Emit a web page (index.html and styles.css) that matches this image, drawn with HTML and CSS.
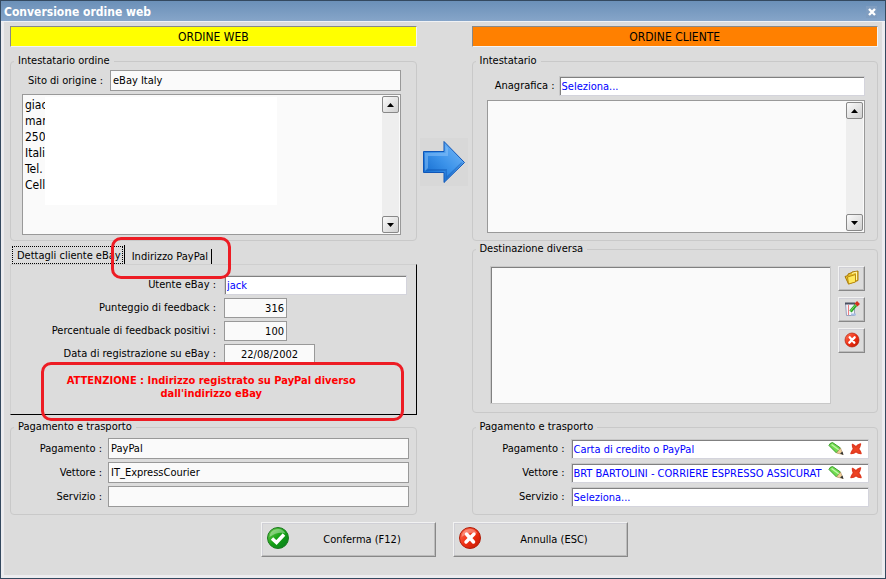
FILE: index.html
```
<!DOCTYPE html>
<html lang="it">
	<head>
		<meta charset="utf-8" />
		<title>Conversione ordine web</title>
		<link rel="stylesheet" href="styles.css">
	</head>
	<body>
		<div class="window">
			<header class="titlebar">
				<h1>Conversione ordine web</h1>
				<button type="button" class="close" aria-label="Chiudi">
					<svg width="8" height="8" viewBox="0 0 8 8"><path d="M1 1l6 6M7 1l-6 6" stroke="#fff" stroke-width="2.4" /></svg>
				</button>
			</header>
			<form class="content">
				<div class="columns">
					<!-- ordine web -->
					<div class="column">
						<h2 class="banner web">ORDINE WEB</h2>
						<fieldset class="holder">
							<legend>Intestatario ordine</legend>
							<div class="row">
								<label for="sito">Sito di origine :</label>
								<input type="text" id="sito" class="flat" value="eBay Italy" readonly />
							</div>
							<div class="memo">
								<textarea aria-label="Intestatario ordine" readonly>giac
mar
250
Itali
Tel.
Cell</textarea>
								<div class="scroll">
									<button type="button" aria-label="Su"><svg width="7" height="4" viewBox="0 0 7 4"><path d="M0 4L3.5 0L7 4z" /></svg></button>
									<button type="button" aria-label="Giù"><svg width="7" height="4" viewBox="0 0 7 4"><path d="M0 0L3.5 4L7 0z" /></svg></button>
								</div>
								<div class="mask"></div>
							</div>
						</fieldset>
						<div class="tabs">
							<button type="button" class="tab active"><span>Dettagli cliente eBay</span></button>
							<button type="button" class="tab">Indirizzo PayPal<i class="callout"></i></button>
						</div>
						<div class="panel">
							<div class="row">
								<label for="utente">Utente eBay :</label>
								<input type="text" id="utente" class="sunken" value="jack" />
							</div>
							<div class="row">
								<label for="punteggio">Punteggio di feedback :</label>
								<input type="text" id="punteggio" class="flat number" value="316" readonly />
							</div>
							<div class="row">
								<label for="percentuale">Percentuale di feedback positivi :</label>
								<input type="text" id="percentuale" class="flat number" value="100" readonly />
							</div>
							<div class="row">
								<label for="data">Data di registrazione su eBay :</label>
								<input type="text" id="data" class="flat date" value="22/08/2002" readonly />
							</div>
							<p class="warning">ATTENZIONE : Indirizzo registrato su PayPal diverso<br />dall'indirizzo eBay<i class="callout"></i></p>
						</div>
						<fieldset class="payment">
							<legend>Pagamento e trasporto</legend>
							<div class="row">
								<label for="pagamento1">Pagamento :</label>
								<input type="text" id="pagamento1" class="flat" value="PayPal" readonly />
							</div>
							<div class="row">
								<label for="vettore1">Vettore :</label>
								<input type="text" id="vettore1" class="flat" value="IT_ExpressCourier" readonly />
							</div>
							<div class="row">
								<label for="servizio1">Servizio :</label>
								<input type="text" id="servizio1" class="flat" value="" readonly />
							</div>
						</fieldset>
					</div>

					<div class="arrow">
						<svg width="48" height="48" viewBox="0 0 48 48">
							<defs>
								<linearGradient id="blue" x1="0" y1="1" x2="1" y2="0">
									<stop offset="0" stop-color="#0a62c8" />
									<stop offset="0.5" stop-color="#3c93ea" />
									<stop offset="1" stop-color="#7cbcf8" />
								</linearGradient>
							</defs>
							<path d="M3.5 13.5H24V3.5L44.5 24.5L24 44.5V34.5H3.5z" fill="url(#blue)" stroke="#0f56b8" />
							<path d="M5 33V15H25.5V7.5L28 10V18H8V30z" fill="#8cc4fa" opacity=".5" />
							<path d="M5 33L8 31H27V38L41 24.5H43L25.5 42V33z" fill="#0b4fae" opacity=".4" />
						</svg>
					</div>

					<!-- ordine cliente -->
					<div class="column">
						<h2 class="banner client">ORDINE CLIENTE</h2>
						<fieldset class="holder customer">
							<legend>Intestatario</legend>
							<div class="row">
								<label for="anagrafica">Anagrafica :</label>
								<input type="text" id="anagrafica" class="sunken" value="Seleziona..." />
							</div>
							<div class="memo">
								<textarea aria-label="Intestatario" readonly></textarea>
								<div class="scroll">
									<button type="button" aria-label="Su"><svg width="7" height="4" viewBox="0 0 7 4"><path d="M0 4L3.5 0L7 4z" /></svg></button>
									<button type="button" aria-label="Giù"><svg width="7" height="4" viewBox="0 0 7 4"><path d="M0 0L3.5 4L7 0z" /></svg></button>
								</div>
							</div>
						</fieldset>
						<fieldset class="destination">
							<legend>Destinazione diversa</legend>
							<textarea class="list" aria-label="Destinazione diversa" readonly></textarea>
							<div class="tools">
								<button type="button" class="raised" aria-label="Apri">
									<svg width="16" height="16" viewBox="0 0 16 16">
										<path d="M1 6.5l3-1V4l4-1.5V2l6-1v9.5L4.5 14z" fill="#e9c22c" stroke="#a87908" />
										<path d="M3.5 7L11.5 4.5v7.5L4.5 14z" fill="#ffe95e" stroke="#b98a10" />
										<path d="M8 3.5l4.5-1.5v8" fill="none" stroke="#fff6b0" />
									</svg>
								</button>
								<button type="button" class="raised" aria-label="Modifica">
									<svg width="16" height="16" viewBox="0 0 16 16">
										<path d="M1.5 2.5h9v12h-8z" fill="#f2f4fb" stroke="#9aa0b8" />
										<path d="M1 2.5h10" stroke="#4c5060" stroke-width="2" />
										<path d="M4.5 4v10" stroke="#ee7f7f" />
										<path d="M7 13.5h5" stroke="#a8c0e4" stroke-width="2" />
										<path d="M6.5 10.5L12 4" stroke="#2fa32a" stroke-width="3" />
										<path d="M6.5 10L11.5 4" stroke="#7de06a" />
										<path d="M12 4L14.5 1.5" stroke="#d5301c" stroke-width="4" />
									</svg>
								</button>
								<button type="button" class="raised" aria-label="Elimina">
									<svg width="16" height="16" viewBox="0 0 24 24">
										<circle cx="12" cy="12" r="10.5" fill="url(#red)" stroke="#b01c08" />
										<path d="M8.5 8l7 8M16 8l-8 8" stroke="#fff" stroke-width="3.5" stroke-linecap="round" />
									</svg>
								</button>
							</div>
						</fieldset>
						<fieldset class="payment customer">
							<legend>Pagamento e trasporto</legend>
							<div class="row">
								<label for="pagamento2">Pagamento :</label>
								<div class="sunken lookup">
									<input type="text" id="pagamento2" value="Carta di credito o PayPal" />
									<button type="button" aria-label="Modifica pagamento"><svg width="16" height="16" viewBox="0 0 16 16"><use href="#pencil" /></svg></button>
									<button type="button" aria-label="Elimina pagamento"><svg width="12" height="12" viewBox="0 0 12 12"><use href="#cross" /></svg></button>
								</div>
							</div>
							<div class="row">
								<label for="vettore2">Vettore :</label>
								<div class="sunken lookup">
									<input type="text" id="vettore2" value="BRT BARTOLINI - CORRIERE ESPRESSO ASSICURAT" />
									<button type="button" aria-label="Modifica vettore"><svg width="16" height="16" viewBox="0 0 16 16"><use href="#pencil" /></svg></button>
									<button type="button" aria-label="Elimina vettore"><svg width="12" height="12" viewBox="0 0 12 12"><use href="#cross" /></svg></button>
								</div>
							</div>
							<div class="row">
								<label for="servizio2">Servizio :</label>
								<input type="text" id="servizio2" class="sunken" value="Seleziona..." />
							</div>
						</fieldset>
					</div>
				</div>

				<div class="actions">
					<button type="button" class="raised">
						<svg width="24" height="24" viewBox="0 0 24 24">
							<circle cx="12" cy="12" r="10.5" fill="url(#green)" stroke="#1c7a20" />
							<path d="M3.5 11a8.5 8.5 0 0 1 16-3.5Q12 5 3.5 11z" fill="#fff" opacity=".35" />
							<path d="M6 12.5l4.5 4L18 8.5" fill="none" stroke="#fff" stroke-width="3.5" />
						</svg>
						<span>Conferma (F12)</span>
					</button>
					<button type="button" class="raised">
						<svg width="24" height="24" viewBox="0 0 24 24">
							<circle cx="12" cy="12" r="10.5" fill="url(#red)" stroke="#b01c08" />
							<path d="M3.5 11a8.5 8.5 0 0 1 16-3.5Q12 5 3.5 11z" fill="#fff" opacity=".3" />
							<path d="M8.5 8l7 8M16 8l-8 8" stroke="#fff" stroke-width="3.5" stroke-linecap="round" />
						</svg>
						<span>Annulla (ESC)</span>
					</button>
				</div>
			</form>
		</div>

		<!-- icone condivise -->
		<svg class="defs" width="0" height="0" aria-hidden="true">
			<defs>
				<linearGradient id="red" x1="0" y1="0" x2="1" y2="1">
					<stop offset="0" stop-color="#ff7a5c" />
					<stop offset="0.5" stop-color="#f03014" />
					<stop offset="1" stop-color="#c01800" />
				</linearGradient>
				<linearGradient id="green" x1="0" y1="0" x2="1" y2="1">
					<stop offset="0" stop-color="#7fd35a" />
					<stop offset="0.5" stop-color="#12a012" />
					<stop offset="1" stop-color="#0a7a22" />
				</linearGradient>
				<g id="pencil">
					<path d="M1 4.5Q1.5 2 4.5 1.5L12.5 7L8.5 12z" fill="#6fdc4e" stroke="#3b9c2c" />
					<path d="M3.5 3.5L11 9" stroke="#c2f5a8" stroke-width="1.5" />
					<path d="M8.5 12L12.5 7L15 13.5z" fill="#f0cf98" stroke="#a98a5c" stroke-width=".6" />
					<path d="M12 12.5l2.5-2 1 3.5z" fill="#333" />
				</g>
				<g id="cross">
					<path d="M2.5 1.5Q5 3 6 4Q7.5 2 10.5 1Q10 4 8.5 6Q10 7.5 11 10.5Q8 10.5 6 8.5Q4 10.5 1 10.5Q2 8 3.5 6Q2.5 4 2.5 1.5z" fill="#ee4422" stroke="#e03a20" stroke-width="1.5" stroke-linejoin="round" />
				</g>
			</defs>
		</svg>
	</body>
</html>
```
FILE: styles.css
```
*{
	margin: 0;
	padding: 0;
	box-sizing: border-box;
}
body,
input,
textarea,
button{
	font-family: Tahoma, "DejaVu Sans Condensed", "Noto Sans", sans-serif;
	font-size: 11px;
	line-height: 14px;
	color: #000;
}
button{
	background: none;
	border: 0;
}
input,
textarea{
	min-width: 0;
	outline: 0;
}
.defs{
	position: absolute;
}
/*finestra*/
.window{
	min-height: 100vh;
	background: #dcdcdc;
	border: 1px solid #34495f;
	display: flex;
	flex-direction: column;
}
.titlebar{
	height: 21px;
	padding: 2px 8px 0 3px;
	display: flex;
	align-items: center;
	justify-content: space-between;
	background: linear-gradient(#6b90b8, #86a5c9);
	border-bottom: 1px solid #f0f2f5;
}
.titlebar h1{
	font-size: 12px;
	line-height: 16px;
	color: #fff;
}
.close{
	width: 11px;
	height: 12px;
	display: flex;
	align-items: center;
	justify-content: center;
	background: #7f9dc0;
}
.content{
	flex: 1;
	padding: 4px 4px 0 6px;
	border: solid #ececef;
	border-width: 0 3px 3px 3px;
}
.columns{
	display: grid;
	grid-template-columns: 1fr 55px 1fr;
}
.column{
	min-width: 0;
	display: flex;
	flex-direction: column;
}
.banner{
	height: 21px;
	margin-bottom: 7px;
	font-size: 12px;
	font-weight: normal;
	line-height: 20px;
	text-align: center;
	border: 1px solid #888;
	border-right-color: #f4f4f4;
	border-bottom-color: #f4f4f4;
}
.web{
	background: #ffff00;
}
.client{
	background: #ff8000;
}
.arrow{
	display: flex;
	justify-content: center;
	align-items: flex-start;
	padding-top: 112px;
}
.arrow svg{
	background: #d8d8d8;
}
/*gruppi*/
fieldset{
	min-width: 0;
	border: 1px solid #c9c9c9;
	border-radius: 4px;
}
legend{
	padding: 0 4px;
}
.row{
	display: flex;
	align-items: center;
}
.row label{
	flex: none;
	text-align: right;
	white-space: nowrap;
}
.row > input,
.lookup{
	flex: 1;
}
.flat{
	height: 21px;
	padding: 0 2px;
	background: #fafafa;
	border: 1px solid #999;
}
.sunken{
	height: 20px;
	padding: 0 2px;
	color: #0000ff;
	background: #fff;
	border: 1px solid #c8c8c8;
	border-right-color: #d4d4dc;
	border-bottom-color: #d4d4dc;
	box-shadow: inset 1px 1px #808080;
}
.holder{
	padding: 2px 15px 5px 11px;
	margin-bottom: 4px;
}
.holder legend{
	margin-left: -8px;
}
.holder label{
	width: 81px;
	margin-right: 7px;
}
.holder.customer{
	padding: 8px 12px 7px 14px;
	margin-bottom: 1px;
}
.customer legend{
	margin-left: -11px;
}
.customer label{
	width: 68px;
	margin-right: 4px;
}
.memo{
	position: relative;
	display: flex;
	height: 141px;
	margin-top: 3px;
	background: #fafafa;
	border: 1px solid #999;
}
.customer .memo{
	height: 133px;
	margin-top: 4px;
}
.memo textarea{
	flex: 1;
	padding: 2px;
	font-size: 12px;
	line-height: 16px;
	background: none;
	border: 0;
	resize: none;
	overflow: hidden;
}
.scroll{
	width: 17px;
	margin: 1px;
	display: flex;
	flex-direction: column;
	justify-content: space-between;
	background: #eee;
}
.scroll button{
	height: 17px;
	display: flex;
	align-items: center;
	justify-content: center;
	background: linear-gradient(135deg, #fafafa, #d0d0d0);
	border: 1px solid #888;
	border-radius: 2px;
}
/*copre i dati personali*/
.mask{
	position: absolute;
	top: 2px;
	left: 22px;
	width: 232px;
	height: 108px;
	background: #fff;
}
/*schede*/
.tabs{
	display: flex;
	height: 19px;
	align-items: flex-end;
}
.tab{
	position: relative;
	height: 15px;
	padding: 0 3px 0 7px;
	border-right: 1px solid #000;
}
.tab.active{
	height: 19px;
	padding: 1px 1px 0 2px;
}
.tab.active span{
	display: block;
	height: 18px;
	padding: 2px 1px 0 4px;
	border: 1px dotted #000;
}
.callout{
	position: absolute;
	border: 3px solid #ed1c24;
	border-radius: 10px;
	pointer-events: none;
}
.tab .callout{
	top: -12px;
	left: -14px;
	right: -20px;
	bottom: -15px;
}
.panel{
	margin-bottom: 5px;
	padding: 10px 9px 7px 11px;
	display: flex;
	flex-direction: column;
	gap: 3px;
	border: 1px solid #cfcfcf;
	border-right-color: #000;
	border-bottom-color: #000;
}
.panel label{
	width: 194px;
	margin-right: 8px;
}
.panel .number,
.panel .date{
	height: 20px;
	flex: 0 0 63px;
	text-align: right;
}
.panel .date{
	flex-basis: 91px;
	text-align: center;
}
.warning{
	position: relative;
	height: 40px;
	padding: 7px 6px 0 0;
	font-weight: bold;
	line-height: 13px;
	text-align: center;
	color: #ff0000;
}
.warning .callout{
	top: -5px;
	left: 19px;
	right: 3px;
	bottom: -14px;
}
/*destinazione*/
.destination{
	display: flex;
	gap: 7px;
	padding: 10px 12px 8px 17px;
	margin-bottom: 7px;
}
.destination legend{
	margin-left: -14px;
}
.list{
	flex: 1;
	height: 138px;
	background: #fafafa;
	border: 1px solid #c8c8c8;
	box-shadow: inset 1px 1px #808080;
	resize: none;
}
.tools{
	display: flex;
	flex-direction: column;
	gap: 6px;
}
.raised{
	display: flex;
	align-items: center;
	background: #dcdcdc;
	border: 1px solid #f2f2f2;
	border-right-color: #888;
	border-bottom-color: #888;
	box-shadow: inset -1px -1px #bcbcbc, inset 1px 1px #d0d0d6;
}
.tools .raised{
	width: 27px;
	height: 25px;
	padding-bottom: 2px;
	justify-content: center;
}
/*pagamento*/
.payment{
	display: flex;
	flex-direction: column;
	gap: 3px;
	padding: 4px 7px 7px 11px;
}
.payment legend{
	margin-left: -8px;
}
.payment label{
	width: 80px;
	margin-right: 6px;
}
.payment.customer{
	gap: 4px;
	padding: 5px 8px 7px 14px;
}
.payment.customer legend{
	margin-left: -11px;
}
.payment.customer label{
	width: 78px;
}
.lookup{
	min-width: 0;
	display: flex;
	align-items: center;
	gap: 6px;
	padding-right: 6px;
}
.lookup input{
	flex: 1;
	height: 16px;
	color: #0000ff;
	background: none;
	border: 0;
}
.lookup button{
	display: flex;
}
/*pulsanti*/
.actions{
	display: flex;
	justify-content: center;
	gap: 17px;
	margin-top: 7px;
}
.actions .raised{
	width: 175px;
	height: 35px;
	padding-left: 4px;
}
.actions svg{
	margin-bottom: 3px;
}
.actions span{
	flex: 1;
}
```
